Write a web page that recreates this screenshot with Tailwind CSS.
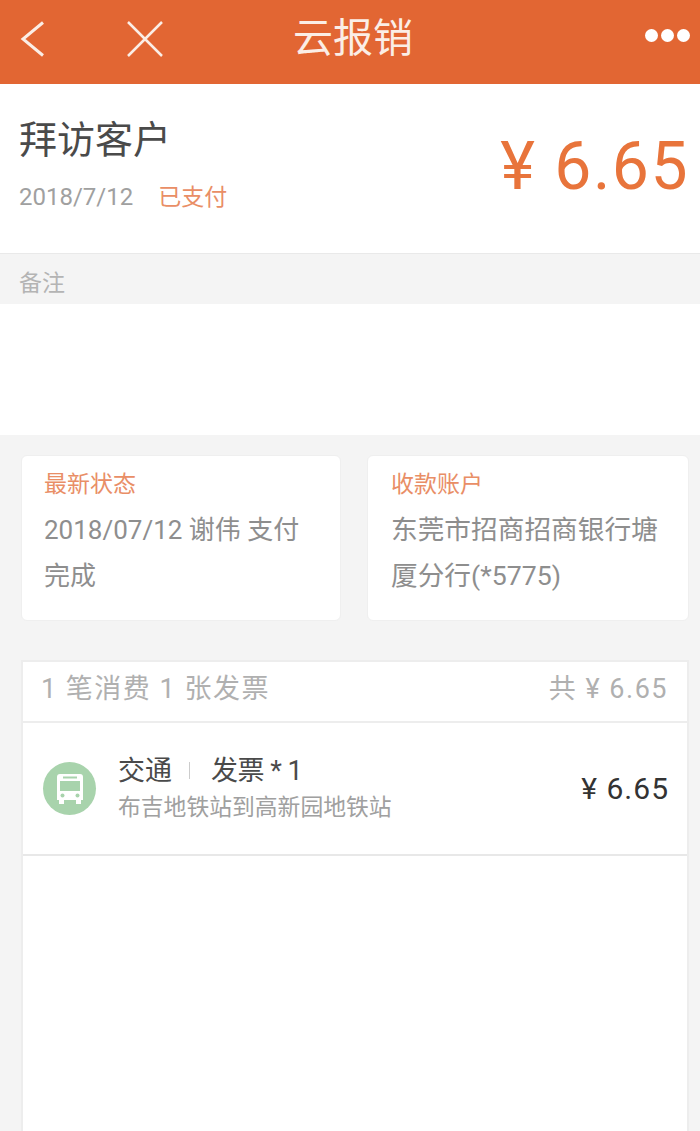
<!DOCTYPE html>
<html lang="zh-CN">
<head>
    <meta charset="UTF-8">
    <meta name="viewport" content="width=device-width, initial-scale=1.0">
    <title>云报销</title>
    <script src="https://cdn.jsdelivr.net/npm/@tailwindcss/browser@4"></script>
</head>
<body class="bg-[#f4f4f4] font-['Roboto','Noto_Sans_CJK_SC',sans-serif]">
<div class="h-[1131px] w-[700px] overflow-hidden flex flex-col">
    <!-- header -->
    <header class="h-[84px] shrink-0 bg-[#e26633] relative flex items-center justify-center text-[#fbeee6]">
        <svg class="absolute left-[20px] top-[21px]" width="26" height="36" viewBox="0 0 26 36" fill="none" stroke="currentColor" stroke-width="3"><path d="M23 1.500 L3 18 L23 34.500"/></svg>
        <svg class="absolute left-[125px] top-[21px]" width="40" height="36" viewBox="0 0 40 36" fill="none" stroke="currentColor" stroke-width="2.500"><path d="M3 1 L37 35 M37 1 L3 35"/></svg>
        <h1 class="text-[40px] leading-none ml-[6px] -mt-[6px]">云报销</h1>
        <div class="absolute left-[645px] top-[29px] flex gap-[3px]">
            <span class="w-[13px] h-[13px] rounded-full bg-white"></span>
            <span class="w-[13px] h-[13px] rounded-full bg-white"></span>
            <span class="w-[13px] h-[13px] rounded-full bg-white"></span>
        </div>
    </header>

    <!-- title -->
    <section class="h-[170px] shrink-0 bg-white border-b border-[#e9e9e9] pl-[19px] pr-[11px] flex justify-between">
        <div>
            <div class="text-[38px] leading-none text-[#4a4a4a] mt-[37px]">拜访客户</div>
            <div class="flex items-center mt-[26px] text-[23px] leading-none">
                <span class="text-[24px] text-[#a0a0a0]">2018/7/12</span>
                <span class="text-[#e98e66] ml-[25px]">已支付</span>
            </div>
        </div>
        <div class="text-[66px] leading-none text-[#e8743b] mt-[50px] tracking-[1.500px]">¥ 6.65</div>
    </section>

    <div class="h-[50px] shrink-0 pl-[19px] pt-[10px] flex items-center text-[23px] text-[#b4b4b4]">备注</div>
    <div class="h-[131px] shrink-0 bg-white"></div>

    <!-- cards -->
    <section class="shrink-0 grid grid-cols-[320px_322px] gap-[26px] pl-[21px] mt-[20px]">
        <div class="h-[166px] bg-white rounded-md border border-[#efefef] pl-[22px] pt-[16px] text-[26px] leading-[46px] text-[#8e8e8e]">
            <div class="text-[23px] leading-[26px] text-[#e98e66] mb-[9px]">最新状态</div>
            <div>2018/07/12 谢伟 支付<br>完成</div>
        </div>
        <div class="h-[166px] bg-white rounded-md border border-[#efefef] pl-[23px] pt-[16px] text-[26.700px] leading-[46px] text-[#8e8e8e]">
            <div class="text-[23px] leading-[26px] text-[#e98e66] mb-[9px]">收款账户</div>
            <div>东莞市招商招商银行塘<br>厦分行(*5775)</div>
        </div>
    </section>

    <!-- expenses -->
    <section class="flex-1 mt-[39px] ml-[21px] mr-[11px] bg-white border-x-2 border-t-2 border-[#ededed]">
        <div class="h-[61px] border-b-2 border-[#ededed] pl-[18px] pr-[19px] pb-[4px] flex items-center justify-between text-[#b0b0b0] text-[27px] tracking-[1.500px]">
            <span>1 笔消费 1 张发票</span>
            <span>共 ¥ 6.65</span>
        </div>
        <div class="h-[133px] border-b-2 border-[#e8e8e8] pl-[20px] pr-[18px] flex items-center justify-between">
            <div class="flex items-center">
                <div class="w-[53px] h-[53px] rounded-full bg-[#a8d3ac] flex items-center justify-center">
                    <svg width="28" height="32" viewBox="0 0 28 32" fill="#fff"><path fill-rule="evenodd" d="M1 4 Q1 1 4 1 H24 Q27 1 27 4 V27 H1 Z M4 8 V18 H24 V8 Z M7 3.500 V5.500 H21 V3.500 Z"/><rect x="3" y="27" width="5" height="4"/><rect x="20" y="27" width="5" height="4"/><circle cx="6.500" cy="22.500" r="2" fill="#a8d3ac"/><circle cx="21.500" cy="22.500" r="2" fill="#a8d3ac"/></svg>
                </div>
                <div class="ml-[22px] -mt-[1px]">
                    <div class="flex items-center text-[27px] leading-[34px] text-[#4a4a4a]">
                        <span>交通</span>
                        <span class="w-px h-[17px] bg-[#ccc] ml-[17px] mr-[21px]"></span>
                        <span class="tracking-[-0.500px]">发票 * 1</span>
                    </div>
                    <div class="text-[22.800px] leading-[30px] text-[#a0a0a0] mt-[5px]">布吉地铁站到高新园地铁站</div>
                </div>
            </div>
            <div class="text-[30px] leading-none text-[#333] tracking-[1px] mt-[1px]">¥ 6.65</div>
        </div>
    </section>
</div>
</body>
</html>
